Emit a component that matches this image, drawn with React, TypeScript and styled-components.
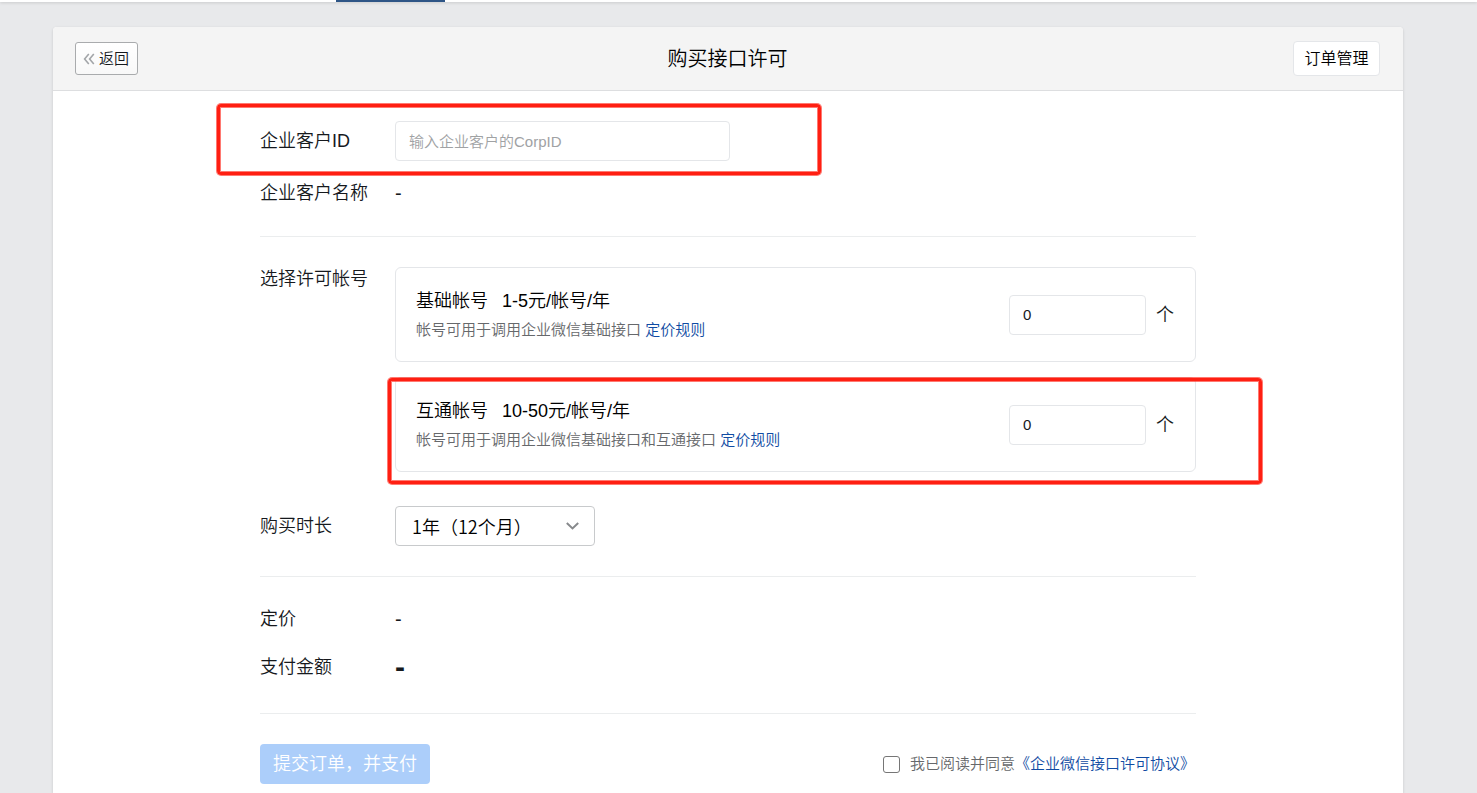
import React, { useState } from "react";
import styled, { createGlobalStyle } from "styled-components";

const GlobalStyle = createGlobalStyle`
  * { box-sizing: border-box; }
  body {
    margin: 0;
    background: #e8e9eb;
    color: #16191d;
    font-family: "Liberation Sans", "Noto Sans CJK SC", sans-serif;
    font-size: 18px;
    font-weight: 350;
    line-height: 24px;
  }
  button, input, select { font: inherit; color: inherit; margin: 0; }
  a { color: #0f4ba3; text-decoration: none; }
`;

const Page = styled.div`
  min-height: 100vh;
  display: flex;
  flex-direction: column;
`;

const TopNav = styled.nav`
  height: 2px;
  padding-left: 336px;
  background: #fff;
  box-shadow: 0 1px 3px rgba(0, 0, 0, 0.15);
`;

const ActiveTab = styled.div`
  width: 109px;
  height: 2px;
  background: #2e5586;
`;

const Panel = styled.main`
  flex: 1;
  margin: 25px 74px 0 53px;
  background: #fff;
  border-radius: 4px 4px 0 0;
  box-shadow: 0 1px 3px rgba(0, 0, 0, 0.15);
`;

const PanelHeader = styled.header`
  display: grid;
  grid-template-columns: 1fr auto 1fr;
  align-items: center;
  height: 64px;
  padding: 0 23px 0 22px;
  background: #f4f4f4;
  border-bottom: 1px solid #dddee0;
  border-radius: 4px 4px 0 0;
`;

const Title = styled.h1`
  margin: 0;
  font-size: 20px;
  font-weight: inherit;
  color: #000;
`;

const BackButton = styled.button`
  justify-self: start;
  display: flex;
  align-items: center;
  gap: 4px;
  height: 33px;
  padding: 0 8px 0 7px;
  border: 1px solid #a9abad;
  border-radius: 3px;
  background: linear-gradient(#fff, #f8f8f8);
  font-size: 15px;
`;

const OrdersButton = styled.button`
  justify-self: end;
  width: 87px;
  height: 35px;
  padding: 0;
  border: 1px solid #e4e6e9;
  border-radius: 4px;
  background: #fff;
  color: #000;
  font-size: 16px;
`;

const Form = styled.form`
  max-width: 936px;
  margin: 0 auto;
  padding: 30px 0 8px;
`;

const Section = styled.section<{ $gap: number; $bottom?: number }>`
  display: flex;
  flex-direction: column;
  gap: ${(p) => p.$gap}px;
  padding-bottom: ${(p) => p.$bottom ?? 30}px;
  margin-bottom: 30px;
  border-bottom: 1px solid #ebedee;
`;

const Row = styled.div<{ $align?: string }>`
  position: relative;
  display: grid;
  grid-template-columns: 135px 1fr;
  align-items: ${(p) => p.$align ?? "center"};
`;

const Label = styled.label``;

const Amount = styled.output<{ $strong?: boolean }>`
  font-size: ${(p) => (p.$strong ? 30 : 20)}px;
  font-weight: ${(p) => (p.$strong ? 700 : 400)};
`;

const TextInput = styled.input<{ $width: number }>`
  width: ${(p) => p.$width}px;
  height: 40px;
  padding: 0 13px;
  border: 1px solid #e4e6e9;
  border-radius: 4px;
  background: #fff;
  font-size: 15px;
  outline: none;
  &::placeholder { color: #a0a2a4; opacity: 1; }
`;

const Cards = styled.div`
  display: flex;
  flex-direction: column;
  gap: 15px;
  margin-bottom: 4px;
`;

const Card = styled.div`
  position: relative;
  display: flex;
  align-items: center;
  justify-content: space-between;
  height: 95px;
  padding: 0 21px 0 20px;
  border: 1px solid #e4e6e9;
  border-radius: 6px;
`;

const CardTitle = styled.div`
  display: flex;
  gap: 14px;
  margin-bottom: 6px;
  color: #000;
`;

const CardNote = styled.div`
  font-size: 15px;
  line-height: 22px;
  color: #66686b;
`;

const Quantity = styled.label`
  display: flex;
  align-items: center;
  gap: 10px;
`;

const SelectBox = styled.div`
  display: grid;
  width: 200px;
  align-items: center;
  & > * { grid-area: 1 / 1; }
  & > svg { justify-self: end; margin-right: 15px; pointer-events: none; }
`;

const Select = styled.select`
  appearance: none;
  height: 40px;
  padding: 0 16px;
  border: 1px solid #c8cacc;
  border-radius: 4px;
  background: #fff;
  color: #000;
  font-family: "Noto Sans CJK SC", sans-serif;
`;

const Footer = styled.footer`
  display: flex;
  align-items: center;
  justify-content: space-between;
  padding-right: 1px;
`;

const SubmitButton = styled.button`
  width: 170px;
  height: 40px;
  padding: 0;
  border: 0;
  border-radius: 4px;
  background: #accefa;
  color: #fff;
`;

const Agreement = styled.div`
  display: flex;
  align-items: center;
  font-size: 15px;
  color: #66686b;
`;

const Checkbox = styled.input`
  appearance: none;
  width: 17px;
  height: 17px;
  margin: 0 10px 0 0;
  border: 1px solid #767676;
  border-radius: 3px;
  background: #fff;
  &:checked { background: #2e5586; }
`;

const Highlight = styled.div<{ $inset: string }>`
  position: absolute;
  inset: ${(p) => p.$inset};
  border: 3px solid #ff1f12;
  border-radius: 4px;
  box-shadow: 0 0 0 1px rgba(255, 31, 18, 0.6), inset 0 0 0 1px rgba(255, 31, 18, 0.6);
  pointer-events: none;
`;

const plans = [
  { id: "basic", name: "基础帐号", price: "1-5元/帐号/年", note: "帐号可用于调用企业微信基础接口", marked: false },
  { id: "linked", name: "互通帐号", price: "10-50元/帐号/年", note: "帐号可用于调用企业微信基础接口和互通接口", marked: true },
];

function BackIcon() {
  return (
    <svg width="12" height="12" viewBox="0 0 12 12" fill="none" stroke="#a3a6a9" strokeWidth="1.6">
      <path d="M5.8 1 1.6 6l4.2 5M10.8 1 6.6 6l4.2 5" />
    </svg>
  );
}

function ChevronIcon() {
  return (
    <svg width="14" height="10" viewBox="0 0 14 10" fill="none" stroke="#87898c" strokeWidth="2">
      <path d="M.8 2 6.5 7.4 12.2 2" />
    </svg>
  );
}

export default function App() {
  const [counts, setCounts] = useState<Record<string, string>>({ basic: "0", linked: "0" });

  return (
    <Page>
      <GlobalStyle />
      <TopNav><ActiveTab /></TopNav>
      <Panel>
        <PanelHeader>
          <BackButton type="button"><BackIcon />返回</BackButton>
          <Title>购买接口许可</Title>
          <OrdersButton type="button">订单管理</OrdersButton>
        </PanelHeader>
        <Form onSubmit={(e) => e.preventDefault()}>
          <Section $gap={20} $bottom={31}>
            <Row>
              <Label htmlFor="corp-id">企业客户ID</Label>
              <TextInput id="corp-id" $width={335} placeholder="输入企业客户的CorpID" />
              <Highlight $inset="-17px 375px -14px -43px" />
            </Row>
            <Row>
              <Label htmlFor="corp-name">企业客户名称</Label>
              <Amount id="corp-name">-</Amount>
            </Row>
          </Section>
          <Section $gap={30}>
            <Row $align="start">
              <span>选择许可帐号</span>
              <Cards>
                {plans.map((plan) => (
                  <Card key={plan.id}>
                    <div>
                      <CardTitle><span>{plan.name}</span><span>{plan.price}</span></CardTitle>
                      <CardNote>{plan.note} <a href="#pricing">定价规则</a></CardNote>
                    </div>
                    <Quantity>
                      <TextInput
                        $width={137}
                        aria-label={plan.name}
                        value={counts[plan.id]}
                        onChange={(e) => setCounts({ ...counts, [plan.id]: e.target.value })}
                      />
                      个
                    </Quantity>
                    {plan.marked && <Highlight $inset="0 -67px -13px -8px" />}
                  </Card>
                ))}
              </Cards>
            </Row>
            <Row>
              <Label htmlFor="duration">购买时长</Label>
              <SelectBox>
                <Select id="duration"><option>1年（12个月）</option></Select>
                <ChevronIcon />
              </SelectBox>
            </Row>
          </Section>
          <Section $gap={24} $bottom={34}>
            <Row>
              <Label htmlFor="price">定价</Label>
              <Amount id="price">-</Amount>
            </Row>
            <Row>
              <Label htmlFor="total">支付金额</Label>
              <Amount id="total" $strong>-</Amount>
            </Row>
          </Section>
          <Footer>
            <SubmitButton type="submit">提交订单，并支付</SubmitButton>
            <Agreement>
              <Checkbox type="checkbox" id="agree" />
              <label htmlFor="agree">我已阅读并同意</label>
              <a href="#agreement">《企业微信接口许可协议》</a>
            </Agreement>
          </Footer>
        </Form>
      </Panel>
    </Page>
  );
}
